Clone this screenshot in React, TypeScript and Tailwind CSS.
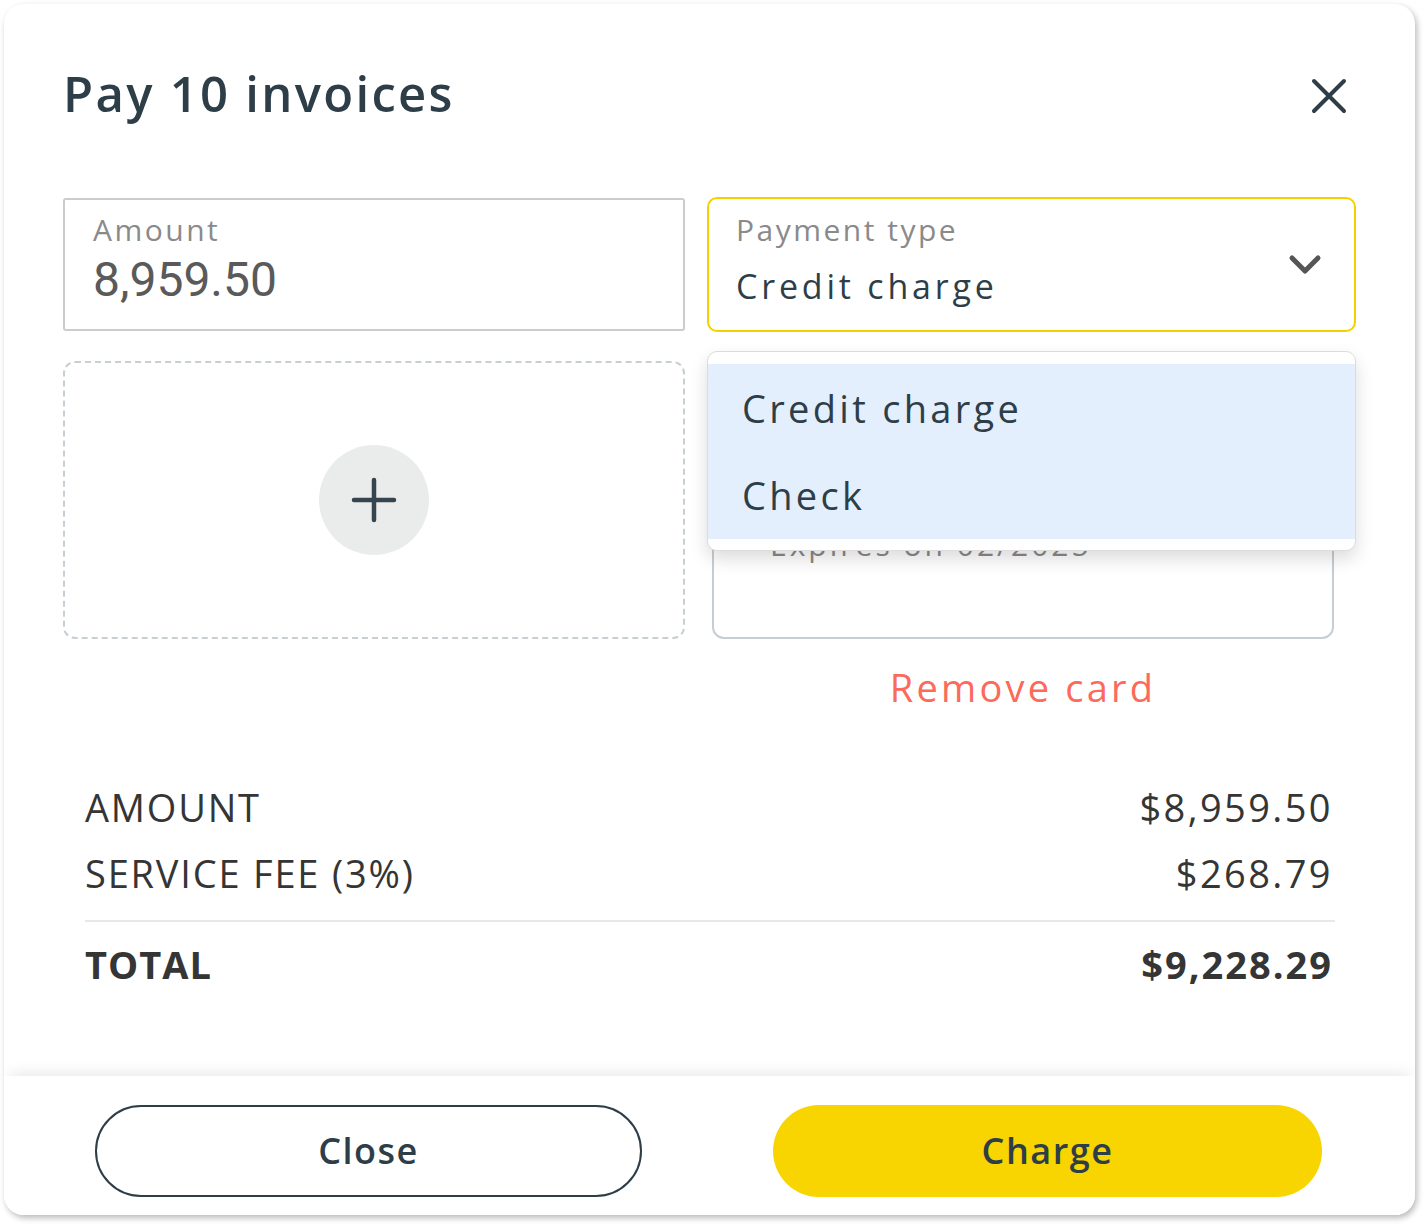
import React from "react";

const summaryRows = [
  { label: "AMOUNT", value: "$8,959.50" },
  { label: "SERVICE FEE (3%)", value: "$268.79" },
];

const CloseIcon = () => (
  <svg width="36" height="36" viewBox="0 0 36 36" fill="none">
    <path d="M3 3L33 33M33 3L3 33" stroke="#2e3e48" strokeWidth="4" strokeLinecap="round" />
  </svg>
);

const ChevronDown = () => (
  <svg width="34" height="22" viewBox="0 0 34 22" fill="none">
    <path d="M4 4L17 17L30 4" stroke="#555555" strokeWidth="5" strokeLinecap="round" strokeLinejoin="round" />
  </svg>
);

const PlusIcon = () => (
  <svg width="46" height="46" viewBox="0 0 46 46" fill="none">
    <path d="M23 3V43M3 23H43" stroke="#36454d" strokeWidth="4.5" strokeLinecap="round" />
  </svg>
);

const App: React.FC = () => {
  return (
    <div className="min-h-screen bg-white pl-[4px] pt-[4px] font-['Open_Sans',sans-serif]">
      <div className="flex h-[1211px] w-[1411px] flex-col overflow-hidden rounded-[20px] bg-white shadow-[2px_3px_6px_rgba(0,0,0,0.28)]">
        <div className="flex-1 px-[59px] pt-[65px]">
          {/* header */}
          <div className="flex h-[48px] items-center justify-between">
            <h2 className="text-[49px] font-semibold leading-none tracking-[2.3px] text-[#2e3e48]">
              Pay 10 invoices
            </h2>
            <button className="mr-[9px] mt-[6px]">
              <CloseIcon />
            </button>
          </div>

          {/* fields */}
          <div className="mt-[80px] grid grid-cols-[622px_649px] gap-x-[22px] gap-y-[29px]">
            <div className="mt-[1px] h-[133px] rounded-[3px] border-2 border-[#cccccc] px-[28px] pt-[15px]">
              <div className="text-[30px] leading-none tracking-[2.5px] text-[#8a8a8a]">Amount</div>
              <div className="mt-[11px] font-['Roboto',sans-serif] text-[48px] leading-none text-[#5a5a5a]">
                8,959.50
              </div>
            </div>

            <div className="relative">
              <div className="flex h-[135px] items-center justify-between rounded-[10px] border-2 border-[#f7cf00] pl-[27px] pr-[32px]">
                <div className="self-start pt-[16px]">
                  <div className="text-[30px] leading-none tracking-[2.5px] text-[#8a8a8a]">Payment type</div>
                  <div className="mt-[24px] text-[34px] leading-none tracking-[3.8px] text-[#2e3e48]">
                    Credit charge
                  </div>
                </div>
                <ChevronDown />
              </div>

              {/* open menu */}
              <div className="absolute left-0 right-0 top-[154px] z-10 rounded-[10px] border border-[#dcdcdc] bg-white pb-[11px] pt-[12px] shadow-[0_8px_18px_rgba(0,0,0,0.14)]">
                <ul className="bg-[#e3effd]">
                  <li className="flex h-[87px] items-center pl-[34px] text-[38px] leading-none tracking-[3.3px] text-[#2e3e48]">
                    Credit charge
                  </li>
                  <li className="flex h-[88px] items-center pl-[34px] text-[38px] leading-none tracking-[3.3px] text-[#2e3e48]">
                    Check
                  </li>
                </ul>
              </div>
            </div>

            <div className="flex h-[278px] items-center justify-center rounded-[12px] border-2 border-dashed border-[#c8cfd3]">
              <div className="flex h-[110px] w-[110px] items-center justify-center rounded-full bg-[#eaeceb]">
                <PlusIcon />
              </div>
            </div>

            <div className="pl-[5px]">
              <div className="h-[278px] w-[622px] rounded-[12px] border-2 border-[#c6ced3] pl-[56px] pt-[167px]">
                <div className="text-[30px] leading-none tracking-[3px] text-[#8a8a8a]">Expires on 02/2025</div>
              </div>
              <div className="mt-[29px] w-[622px] text-center text-[38px] leading-none tracking-[3.2px] text-[#fb6a5a]">
                Remove card
              </div>
            </div>
          </div>

          {/* summary */}
          <div className="mt-[82px] pl-[22px] pr-[23px] text-[#353535]">
            <div className="flex flex-col gap-[28px]">
              {summaryRows.map((row) => (
                <div key={row.label} className="flex items-center justify-between text-[38px] leading-none">
                  <span className="tracking-[1.8px]">{row.label}</span>
                  <span className="tracking-[2.4px]">{row.value}</span>
                </div>
              ))}
            </div>
            <div className="mr-[-2px] mt-[28px] h-[2px] bg-[#e8e8e8]" />
            <div className="mt-[23px] flex items-center justify-between text-[38px] font-bold leading-none">
              <span className="tracking-[1px]">TOTAL</span>
              <span className="tracking-[2px]">$9,228.29</span>
            </div>
          </div>
        </div>

        {/* footer */}
        <div className="relative flex h-[139px] justify-between bg-white pl-[91px] pr-[93px] pt-[29px] shadow-[0_-8px_14px_-6px_rgba(0,0,0,0.1)]">
          <button className="h-[92px] w-[547px] rounded-full border-2 border-[#2e3e48] text-[36px] font-semibold tracking-[1.5px] text-[#2e3e48]">
            Close
          </button>
          <button className="h-[92px] w-[549px] rounded-full bg-[#f8d400] text-[36px] font-semibold tracking-[1.5px] text-[#2e3e48]">
            Charge
          </button>
        </div>
      </div>
    </div>
  );
};

export default App;
